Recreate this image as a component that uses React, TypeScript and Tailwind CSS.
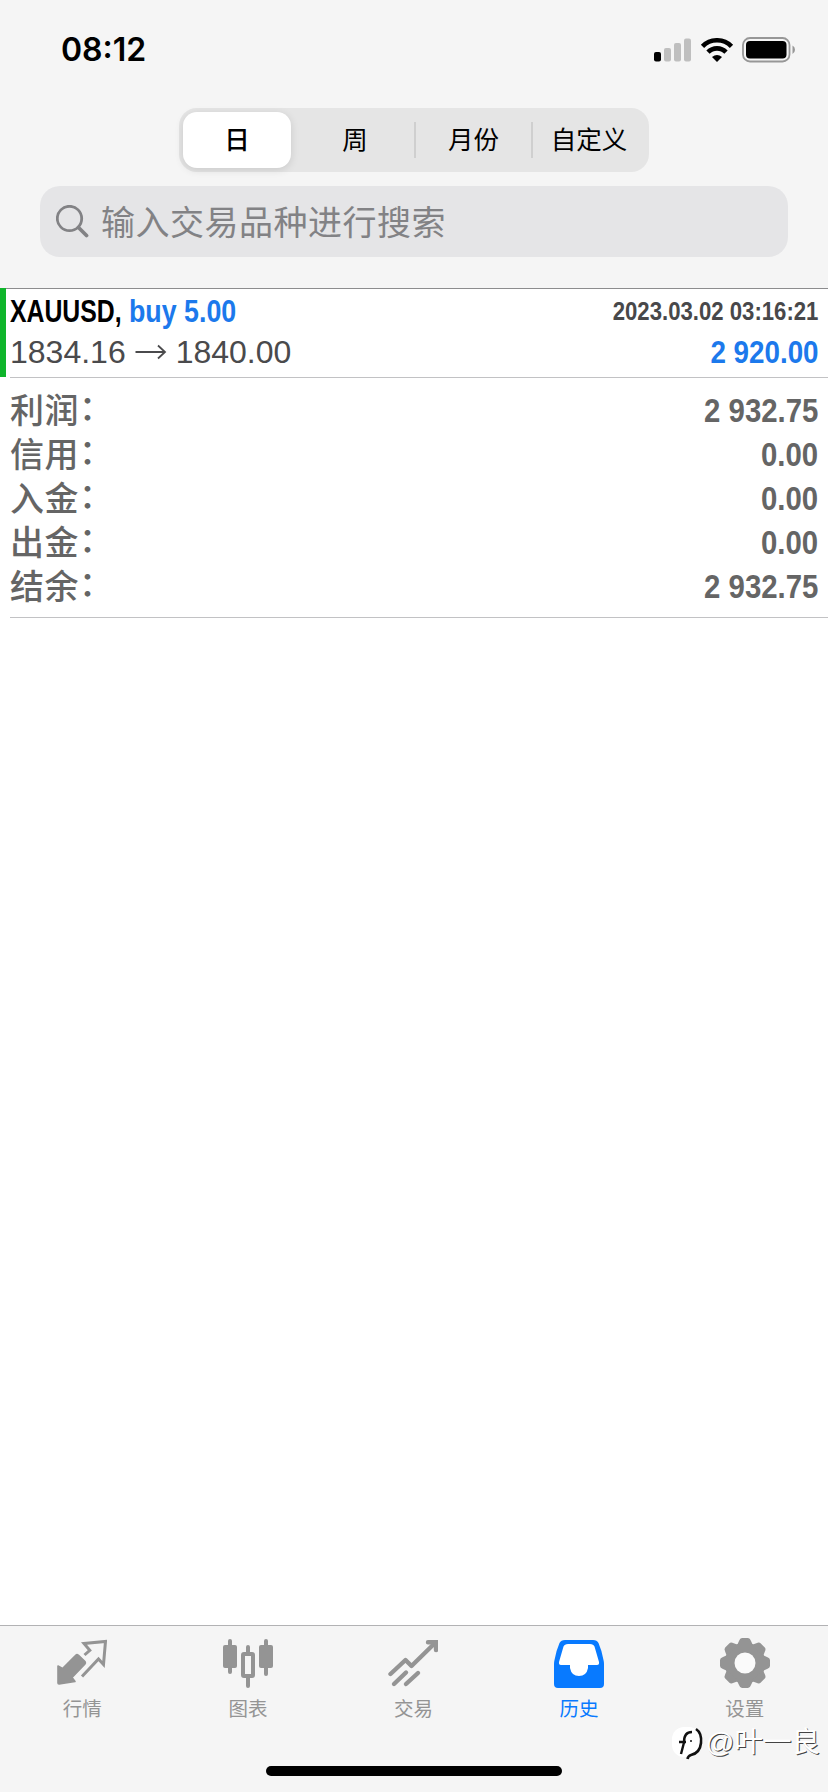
import React from 'react';

type SummaryRow = { label: string; value: string };

const SEGMENTS = ['日', '周', '月份', '自定义'];

// full-width colon
const COLON = '\uff1a';

const SUMMARY: SummaryRow[] = [
  { label: '利润', value: '2 932.75' },
  { label: '信用', value: '0.00' },
  { label: '入金', value: '0.00' },
  { label: '出金', value: '0.00' },
  { label: '结余', value: '2 932.75' },
];

const QuotesIcon = () => (
  <svg width="50" height="50" viewBox="0 0 50 50" strokeLinejoin="round">
    <path
      d="M1 28 L5.5 30.500 L19 17 Q20 16 21.500 17.300 L28 23.500 Q29 25 27.800 26.300 L15 39.500 L18 43.500 L2 46 Q1 46 1 45 Z"
      fill="currentColor"
      stroke="currentColor"
      strokeWidth="1.600"
    />
    <path
      d="M27.500 17 L32.800 12.300 L27 5.500 L48.500 3.500 L46.500 26.500 L41.500 21 L25 38.500"
      fill="none"
      stroke="currentColor"
      strokeWidth="3"
      strokeLinejoin="miter"
    />
  </svg>
);

const ChartIcon = () => (
  <svg width="50" height="50" viewBox="0 0 50 50" fill="currentColor">
    <rect x="0" y="7" width="14" height="23" rx="2" />
    <rect x="5" y="1" width="4" height="35" rx="2" />
    <rect x="36" y="7" width="14" height="23" rx="2" />
    <rect x="41" y="1" width="4" height="37" rx="2" />
    <rect x="20" y="16" width="10" height="22" rx="1" fill="none" stroke="currentColor" strokeWidth="4" />
    <path d="M23 15V9a2 2 0 0 1 4 0v6zM23 39v9a2 2 0 0 0 4 0v-9z" />
  </svg>
);

const TradeIcon = () => (
  <svg
    width="50"
    height="50"
    viewBox="0 0 50 50"
    fill="none"
    stroke="currentColor"
    strokeWidth="4.400"
    strokeLinecap="round"
    strokeLinejoin="round"
  >
    <path d="M2.500 36 L17.500 22 L23.500 28 L47 5" />
    <path d="M40 4.200 H48 V12" strokeLinejoin="miter" />
    <path d="M6 46 L18 34.500 M18 46 L30 35" />
  </svg>
);

const HistoryIcon = () => (
  <svg width="50" height="50" viewBox="0 0 50 50">
    <path
      d="M11 2 H39 Q43 2 44.500 5 Q48 13 49.500 22 Q50 24 50 26 V46 Q50 50 46 50 H4 Q0 50 0 46 V26 Q0 24 0.500 22 Q2 13 5.500 5 Q7 2 11 2 Z"
      fill="currentColor"
    />
    <path
      d="M14 6 H36 Q39.500 6 40.500 8.500 L45 24 Q45.500 27 43 27 H34 V30 Q32.500 38 25 38 Q17.500 38 16 30 V27 H7 Q4.500 27 5 24 L9.500 8.500 Q10.500 6 14 6 Z"
      fill="#fff"
    />
  </svg>
);

const TEETH = [0, 45, 90, 135, 180, 225, 270, 315];

const SettingsIcon = () => (
  <svg width="50" height="50" viewBox="0 0 50 50">
    <g fill="currentColor">
      <circle cx="25" cy="25" r="20" />
      {TEETH.map((angle) => (
        <path
          key={angle}
          d="M16 8 Q18 6 19 3 Q20 0 22 0 H28 Q30 0 31 3 Q32 6 34 8 Z"
          transform={`rotate(${angle} 25 25)`}
        />
      ))}
    </g>
    <circle cx="25" cy="25" r="10.5" fill="#fafafa" />
  </svg>
);

const TABS = [
  { label: '行情', Icon: QuotesIcon },
  { label: '图表', Icon: ChartIcon },
  { label: '交易', Icon: TradeIcon },
  { label: '历史', Icon: HistoryIcon },
  { label: '设置', Icon: SettingsIcon },
];

const StatusBar: React.FC = () => (
  <div className="flex h-[108px] items-start justify-between pt-[29px] pr-8 pl-[61px]">
    <span className="font-['Inter','Liberation_Sans',sans-serif] text-[32px] leading-[42px] font-semibold text-black">
      08:12
    </span>
    <div className="flex h-[42px] items-center pb-px">
      <svg width="38" height="24" viewBox="0 0 38 24">
        <rect x="0" y="14" width="7" height="9.500" rx="2" fill="#000" />
        <rect x="10" y="10" width="7" height="13.500" rx="2" fill="#bfbfbf" />
        <rect x="20" y="5" width="7" height="18.500" rx="2" fill="#bfbfbf" />
        <rect x="30" y="0.500" width="7" height="23" rx="2" fill="#bfbfbf" />
      </svg>
      <svg className="ml-2" width="34" height="24" viewBox="0 0 34 24" fill="none" stroke="#000" strokeWidth="4.600">
        <path d="M2.500 8.300 A20.500 20.500 0 0 1 31.500 8.300" />
        <path d="M8 14.200 A12.500 12.500 0 0 1 26 14.200" />
        <path d="M17 24 L12 19 Q17 15.200 22 19 Z" fill="#000" stroke="none" />
      </svg>
      <svg className="ml-2" width="54" height="26" viewBox="0 0 54 26">
        <rect x="1" y="1" width="46.500" height="23.500" rx="7" fill="none" stroke="#979797" strokeWidth="1.800" />
        <rect x="4" y="4" width="40.500" height="17.500" rx="4" fill="#000" />
        <path d="M50.500 8.500 Q53 10 53 12.700 Q53 15.500 50.500 17 Z" fill="#979797" />
      </svg>
    </div>
  </div>
);

const PeriodPicker: React.FC = () => (
  <div className="mx-auto grid h-16 w-[470px] grid-cols-[113px_118px_117px_114px] rounded-[18px] bg-[#e5e5e5] p-1 text-[25.5px] text-black">
    {SEGMENTS.map((label, index) => (
      <div
        key={label}
        className={
          index === 0
            ? 'mr-[5px] flex items-center justify-center rounded-[14px] bg-white font-medium shadow-[0_2px_8px_rgba(0,0,0,0.12)]'
            : 'flex items-center'
        }
      >
        {index > 1 && <span className="h-9 w-0.5 bg-[#cfcfcf]" />}
        <span className="flex-1 pt-px text-center">{label}</span>
      </div>
    ))}
  </div>
);

const SearchBox: React.FC = () => (
  <div className="mx-10 mt-[14px] flex h-[71px] items-center rounded-[20px] bg-[#e5e5e7] pl-4 text-[#828285]">
    <svg width="33" height="33" viewBox="0 0 33 33" fill="none" stroke="currentColor">
      <circle cx="13.500" cy="13.500" r="12.200" strokeWidth="2.800" />
      <path d="M22.500 22.500 L30.500 30.500" strokeWidth="3.800" strokeLinecap="round" />
    </svg>
    <span className="ml-3 pt-0.5 text-[34px] leading-[50px] tracking-[0.5px]">输入交易品种进行搜索</span>
  </div>
);

const DealRow: React.FC = () => (
  <div className="flex h-[89px]">
    <div className="-mt-px h-[89px] w-1.5 bg-[#0fb52b]" />
    <div className="ml-1 flex flex-1 flex-col border-b border-[#c2c2c4] pr-2.5">
      <div className="flex h-11 items-center justify-between">
        <div className="flex text-[32px] leading-[44px] font-bold whitespace-nowrap">
          <span className="w-[119px] origin-left scale-x-[0.775] text-black">XAUUSD,</span>
          <span className="origin-left scale-x-[0.837] text-[#1c79ec]">buy 5.00</span>
        </div>
        <span className="origin-right scale-x-[0.852] text-[26px] leading-[44px] font-bold text-[#48484a]">
          2023.03.02 03:16:21
        </span>
      </div>
      <div className="-mt-[3px] flex h-[43px] items-center justify-between">
        <div className="flex items-center text-[32px] leading-[40px] text-[#4a4a4c]">
          <span>1834.16</span>
          <svg className="mx-[9px]" width="32" height="20" viewBox="0 0 32 20" fill="none" stroke="currentColor" strokeWidth="1.800">
            <path d="M0.500 10 H30 M23 3.500 L30 10 L23 16.500" />
          </svg>
          <span>1840.00</span>
        </div>
        <span className="-mr-px origin-right scale-x-[0.868] text-[32px] leading-[40px] font-bold text-[#1c79ec]">
          2 920.00
        </span>
      </div>
    </div>
  </div>
);

const Summary: React.FC = () => (
  <div className="ml-2.5 h-[240px] border-b border-[#c2c2c4] pt-[11px] pr-2.5 text-[#656565]">
    {SUMMARY.map((row) => (
      <div key={row.label} className="flex h-11 items-center justify-between">
        <span className="flex text-[34px] leading-[44px] font-medium tracking-[0.5px]">
          {row.label}
          <span className="-mt-[3px]">{COLON}</span>
        </span>
        <span className="origin-right scale-x-[0.877] text-[33.5px] leading-[44px] font-bold">{row.value}</span>
      </div>
    ))}
  </div>
);

const TabBar: React.FC = () => (
  <nav className="relative flex h-[167px] flex-col border-t border-[#b2b2b4] bg-[#f5f5f5]">
    <div className="grid h-[140px] grid-cols-5">
      {TABS.map(({ label, Icon }) => (
        <div
          key={label}
          className={
            label === '历史'
              ? 'flex flex-col items-center pt-3 pr-px text-[#087aff]'
              : 'flex flex-col items-center pt-3 pr-px text-[#949494]'
          }
        >
          <Icon />
          <span className="mt-[7px] text-[19.5px] leading-[28px]">{label}</span>
        </div>
      ))}
    </div>
    <div className="mx-auto h-2.5 w-[296px] rounded-full bg-black" />
    <div className="absolute right-2 bottom-[32px] flex items-center">
      <svg width="32" height="36" viewBox="0 0 32 36" fill="none">
        <rect x="0" y="3" width="29" height="30" rx="12" fill="#fff" />
        <path d="M9 30 L12 18.500 M7 18 H14 M12 18 Q12 8 20 8" stroke="#111" strokeWidth="2.400" />
        <path d="M24 5 Q30 9 29 19 Q28 29 19 31 Q16 32 15.500 35" stroke="#111" strokeWidth="2.600" />
        <circle cx="19" cy="17" r="1" fill="#111" />
      </svg>
      <span className="ml-0.5 text-[28.5px] leading-[36px] text-white [text-shadow:1px_1px_0_#444]">@叶一良</span>
    </div>
  </nav>
);

const App: React.FC = () => (
  <div
    lang="zh-CN"
    className="flex h-[1792px] w-[828px] flex-col overflow-hidden bg-white font-['Liberation_Sans','Noto_Sans_CJK_SC',sans-serif]"
  >
    <header className="h-[289px] border-b border-[#8c8c8e] bg-[#f5f5f5]">
      <StatusBar />
      <PeriodPicker />
      <SearchBox />
    </header>
    <main className="flex-1">
      <DealRow />
      <Summary />
    </main>
    <TabBar />
  </div>
);

export default App;
